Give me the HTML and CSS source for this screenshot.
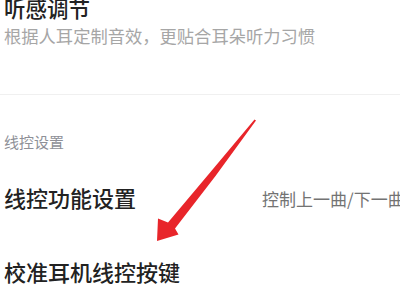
FILE: index.html
```html
<!DOCTYPE html>
<html lang="zh-CN">
<head>
  <meta charset="UTF-8">
  <meta name="viewport" content="width=device-width, initial-scale=1.0">
  <title>线控设置</title>
  <link rel="stylesheet" href="styles.css">
</head>
<body>
  <div class="page">
    <div class="item">
      <h3 class="item-title">听感调节</h3>
      <p class="item-desc">根据人耳定制音效，更贴合耳朵听力习惯</p>
    </div>

    <div class="divider"></div>

    <div class="section-label">线控设置</div>

    <div class="row">
      <h3 class="row-title">线控功能设置</h3>
      <span class="row-value">控制上一曲/下一曲</span>
    </div>

    <div class="row row-last">
      <h3 class="row-title">校准耳机线控按键</h3>
    </div>

    <svg class="arrow" width="400" height="300" viewBox="0 0 400 300" xmlns="http://www.w3.org/2000/svg">
      <polygon points="254.5,122.5 256,123.5 215.5,179 175,231.5 178.5,237.5 157,244 158,221.5 168,225.5 210.5,175" fill="#e8252a"/>
    </svg>
  </div>
</body>
</html>
```

FILE: styles.css
```css
body {
  margin: 0;
  padding: 0;
  background: #fff;
  overflow: hidden;
  font-family: "Noto Sans CJK SC", "Noto Sans", sans-serif;
}
h3, p {
  margin: 0;
}

.page {
  position: relative;
  width: 400px;
  height: 300px;
  padding-left: 4px;
  box-sizing: border-box;
}
.item {
  margin-top: -3px;
}
.item-title {
  font-size: 21.5px;
  line-height: 21px;
  font-weight: 500;
  color: #222;
}
.item-desc {
  margin-top: 9px;
  font-size: 17.3px;
  line-height: 17px;
  color: #a6a6a6;
  white-space: nowrap;
}
.divider {
  margin-top: 50px;
  margin-left: -4px;
  height: 1px;
  background: #f0f0f0;
}
.section-label {
  margin-top: 39px;
  font-size: 15px;
  line-height: 15px;
  color: #8e9097;
}
.row {
  display: flex;
  align-items: center;
  margin-top: 37px;
}
.row-title {
  flex-shrink: 0;
  font-size: 22px;
  line-height: 22px;
  font-weight: 500;
  color: #222;
}
.row-value {
  margin-left: 126px;
  margin-top: 3px;
  font-size: 17px;
  line-height: 17px;
  color: #737373;
  white-space: nowrap;
}
.row-last {
  margin-top: 52px;
}
.arrow {
  position: absolute;
  left: 0;
  top: 0;
  pointer-events: none;
}
```
